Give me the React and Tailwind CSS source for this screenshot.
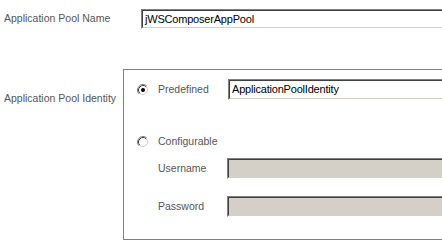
import React from 'react'

// Bouton radio façon Windows classique
const Radio = ({ checked }) => (
  <svg width="12" height="12" viewBox="0 0 12 12" className="shrink-0">
    <circle cx="6" cy="6" r="5" fill="#ffffff" />
    <path d="M2.11 9.89 A5.5 5.5 0 0 1 9.89 2.11" fill="none" stroke="#808080" strokeWidth="1" />
    <path d="M9.89 2.11 A5.5 5.5 0 0 1 2.11 9.89" fill="none" stroke="#ffffff" strokeWidth="1" />
    <path d="M2.82 9.18 A4.5 4.5 0 0 1 9.18 2.82" fill="none" stroke="#404040" strokeWidth="1" />
    <path d="M9.18 2.82 A4.5 4.5 0 0 1 2.82 9.18" fill="none" stroke="#d4d0c8" strokeWidth="1" />
    {checked && <circle cx="6" cy="6" r="2" fill="#000000" />}
  </svg>
)

// Champ de saisie avec bordure enfoncée
const Field = ({ value, disabled, h = 'h-[21px]', w = 'w-[260px]' }) => (
  <div className={`${w} shrink-0 ${h} border-t border-l border-[#808080] border-b border-b-[#ffffff]`}>
    <div
      className={`h-full border-t border-l border-[#404040] border-b border-b-[#d4d0c8] flex items-center pl-[2px] text-[11px] tracking-[-0.2px] text-black ${
        disabled ? 'bg-[#d4d0c8]' : 'bg-white'
      }`}
    >
      {value}
    </div>
  </div>
)

const App = () => {
  return (
    <div
      className="w-[442px] h-[242px] bg-white overflow-hidden text-[10.5px] text-[#555555]"
      style={{ fontFamily: '"Liberation Sans", Arial, sans-serif' }}
    >
      {/* Nom du pool */}
      <div className="flex items-center pt-[9px]">
        <div className="w-[141px] shrink-0 pl-[4px]">Application Pool Name</div>
        <Field value="jWSComposerAppPool" h="h-[20px]" w="w-[320px]" />
      </div>

      {/* Identité du pool */}
      <div className="flex mt-[40px]">
        <div className="w-[123px] shrink-0 pl-[4px] pt-[22px]">Application Pool Identity</div>
        <div className="w-[340px] shrink-0 h-[171px] border border-[#808080]">
          <div className="flex items-center mt-[9px]">
            <div className="w-[104px] shrink-0 flex items-center pl-[13px] gap-[9px]">
              <Radio checked />
              <span>Predefined</span>
            </div>
            <Field value="ApplicationPoolIdentity" />
          </div>

          <div className="flex items-center mt-[31px] h-[21px]">
            <div className="flex items-center pl-[13px] gap-[9px]">
              <Radio />
              <span>Configurable</span>
            </div>
          </div>

          <div className="flex items-center mt-[6px]">
            <div className="w-[103px] shrink-0 pl-[34px]">Username</div>
            <Field disabled />
          </div>

          <div className="flex items-center mt-[17px]">
            <div className="w-[103px] shrink-0 pl-[34px]">Password</div>
            <Field disabled />
          </div>
        </div>
      </div>
    </div>
  )
}

export default App
